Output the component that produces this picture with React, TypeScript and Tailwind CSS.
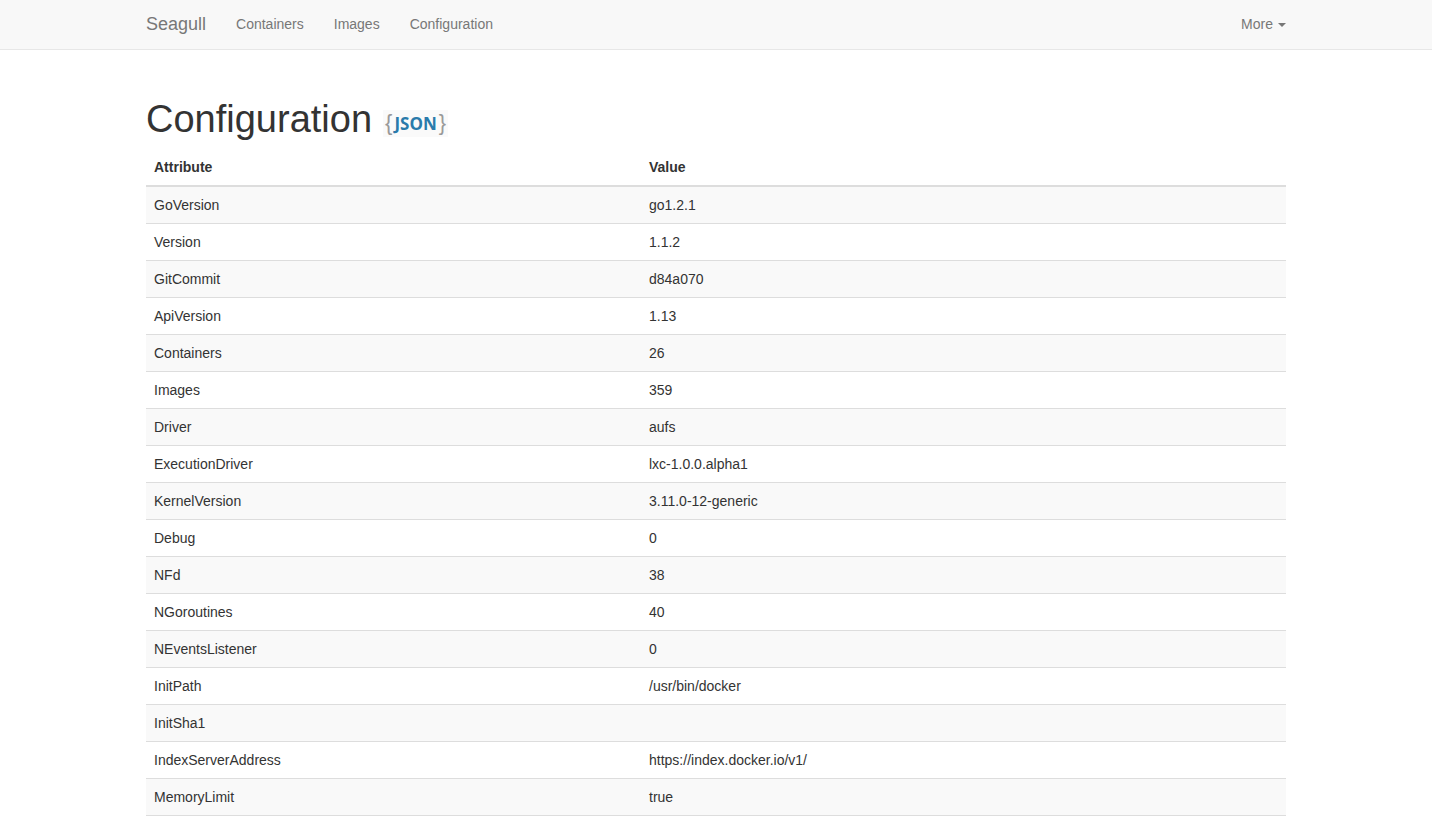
import React from "react";

const ROWS: [string, string][] = [
  ["GoVersion", "go1.2.1"],
  ["Version", "1.1.2"],
  ["GitCommit", "d84a070"],
  ["ApiVersion", "1.13"],
  ["Containers", "26"],
  ["Images", "359"],
  ["Driver", "aufs"],
  ["ExecutionDriver", "lxc-1.0.0.alpha1"],
  ["KernelVersion", "3.11.0-12-generic"],
  ["Debug", "0"],
  ["NFd", "38"],
  ["NGoroutines", "40"],
  ["NEventsListener", "0"],
  ["InitPath", "/usr/bin/docker"],
  ["InitSha1", ""],
  ["IndexServerAddress", "https://index.docker.io/v1/"],
  ["MemoryLimit", "true"],
];

const NAV = ["Containers", "Images", "Configuration"];

export default function App() {
  return (
    <div className="min-h-screen bg-white text-[#333] text-[14px] leading-5 font-['Liberation_Sans',Arial,sans-serif]">
      {/* navbar */}
      <nav className="h-[50px] bg-[#f8f8f8] border-b border-[#e7e7e7]">
        <div className="w-[1170px] mx-auto px-[15px] flex items-start justify-between">
          <div className="flex">
            <a className="-ml-[15px] px-[15px] pt-[14px] text-[18px] leading-5 text-[#777]">Seagull</a>
            {NAV.map(n => (
              <a key={n} className="px-[15px] pt-[14px] text-[#777]">{n}</a>
            ))}
          </div>
          <a className="-mr-[15px] px-[15px] pt-[14px] text-[#777] flex items-center">
            More
            <span className="inline-block ml-[5px] mt-[1px] w-0 h-0 border-t-4 border-x-4 border-t-[#777] border-x-transparent" />
          </a>
        </div>
      </nav>

      <div className="w-[1170px] mx-auto px-[15px]">
        <h1 className="mt-[49px] mb-[10px] text-[38px] leading-[40px] font-medium text-[#333] flex items-end">
          Configuration
          <span className="ml-[11px] mb-[2px] px-[2px] bg-[#fafafa] text-[22px] leading-[26px] text-[#999] flex items-baseline">
            {"{"}
            <span className="mx-[2px] text-[17px] font-bold text-[#2a7bab] font-['Open_Sans',sans-serif]">JSON</span>
            {"}"}
          </span>
        </h1>

        <table className="w-full border-collapse">
          <thead>
            <tr>
              <th className="w-[495px] p-2 text-left font-bold border-b-2 border-[#ddd]">Attribute</th>
              <th className="p-2 text-left font-bold border-b-2 border-[#ddd]">Value</th>
            </tr>
          </thead>
          <tbody>
            {ROWS.map(([k, v], i) => {
              const last = i === ROWS.length - 1;
              return (
                <tr key={k} className={i % 2 === 0 ? "bg-[#f9f9f9]" : ""}>
                  <td className={`p-2 border-t border-[#ddd] ${last ? "border-b" : ""}`}>{k}</td>
                  <td className={`p-2 border-t border-[#ddd] ${last ? "border-b" : ""}`}>{v}</td>
                </tr>
              );
            })}
          </tbody>
        </table>
      </div>
    </div>
  );
}
